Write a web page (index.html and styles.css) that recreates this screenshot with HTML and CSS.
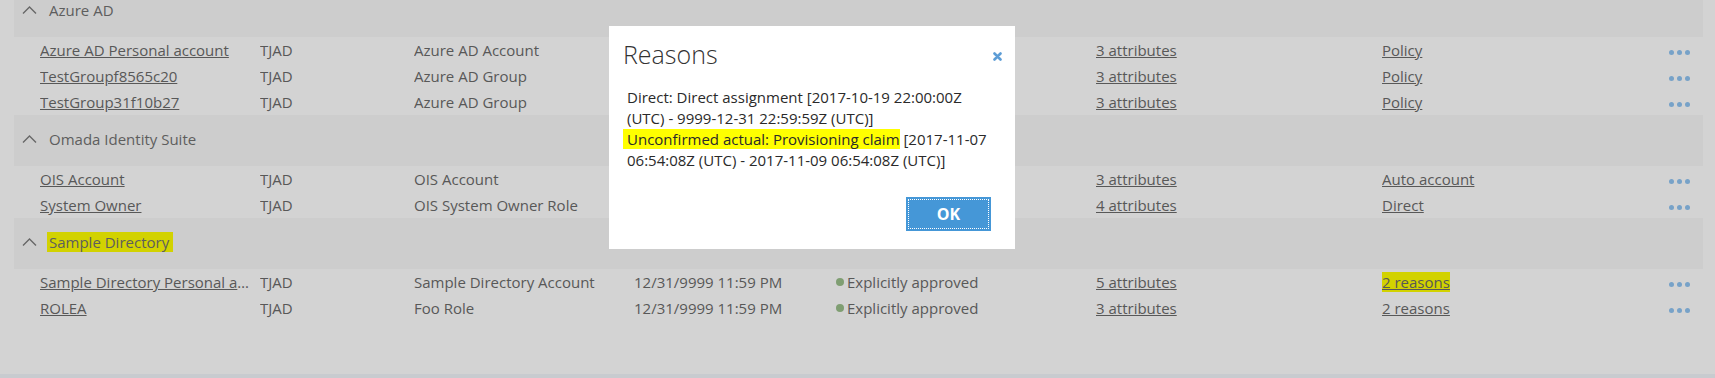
FILE: index.html
```html
<!DOCTYPE html>
<html lang="en">

<head>
    <meta charset="UTF-8">
    <meta name="viewport" content="width=device-width, initial-scale=1.0">
    <title>Assignments - Reasons</title>
    <link rel="stylesheet" href="styles.css">
</head>

<body>

    <div class="page">
        <div class="list">

            <div class="group-head">
                <svg class="chevron" width="15" height="8" viewBox="0 0 15 8"><polyline points="1,7.5 7.5,1 14,7.5"></polyline></svg>
                <span>Azure AD</span>
            </div>
            <div class="row">
                <div class="cell"><a href="#">Azure AD Personal account</a></div>
                <div class="cell">TJAD</div>
                <div class="cell">Azure AD Account</div>
                <div class="cell"></div>
                <div class="cell"></div>
                <div class="cell"><a href="#">3 attributes</a></div>
                <div class="cell"><a href="#">Policy</a></div>
                <div class="more"><i></i><i></i><i></i></div>
            </div>
            <div class="row">
                <div class="cell"><a href="#">TestGroupf8565c20</a></div>
                <div class="cell">TJAD</div>
                <div class="cell">Azure AD Group</div>
                <div class="cell"></div>
                <div class="cell"></div>
                <div class="cell"><a href="#">3 attributes</a></div>
                <div class="cell"><a href="#">Policy</a></div>
                <div class="more"><i></i><i></i><i></i></div>
            </div>
            <div class="row">
                <div class="cell"><a href="#">TestGroup31f10b27</a></div>
                <div class="cell">TJAD</div>
                <div class="cell">Azure AD Group</div>
                <div class="cell"></div>
                <div class="cell"></div>
                <div class="cell"><a href="#">3 attributes</a></div>
                <div class="cell"><a href="#">Policy</a></div>
                <div class="more"><i></i><i></i><i></i></div>
            </div>

            <div class="group-head">
                <svg class="chevron" width="15" height="8" viewBox="0 0 15 8"><polyline points="1,7.5 7.5,1 14,7.5"></polyline></svg>
                <span>Omada Identity Suite</span>
            </div>
            <div class="row">
                <div class="cell"><a href="#">OIS Account</a></div>
                <div class="cell">TJAD</div>
                <div class="cell">OIS Account</div>
                <div class="cell"></div>
                <div class="cell"></div>
                <div class="cell"><a href="#">3 attributes</a></div>
                <div class="cell"><a href="#">Auto account</a></div>
                <div class="more"><i></i><i></i><i></i></div>
            </div>
            <div class="row">
                <div class="cell"><a href="#">System Owner</a></div>
                <div class="cell">TJAD</div>
                <div class="cell">OIS System Owner Role</div>
                <div class="cell"></div>
                <div class="cell"></div>
                <div class="cell"><a href="#">4 attributes</a></div>
                <div class="cell"><a href="#">Direct</a></div>
                <div class="more"><i></i><i></i><i></i></div>
            </div>

            <div class="group-head">
                <svg class="chevron" width="15" height="8" viewBox="0 0 15 8"><polyline points="1,7.5 7.5,1 14,7.5"></polyline></svg>
                <span class="marker marker-head">Sample Directory</span>
            </div>
            <div class="row">
                <div class="cell"><a href="#">Sample Directory Personal account</a></div>
                <div class="cell">TJAD</div>
                <div class="cell">Sample Directory Account</div>
                <div class="cell">12/31/9999 11:59 PM</div>
                <div class="cell status"><span class="dot"></span>Explicitly approved</div>
                <div class="cell"><a href="#">5 attributes</a></div>
                <div class="cell"><a href="#" class="marker">2 reasons</a></div>
                <div class="more"><i></i><i></i><i></i></div>
            </div>
            <div class="row">
                <div class="cell"><a href="#">ROLEA</a></div>
                <div class="cell">TJAD</div>
                <div class="cell">Foo Role</div>
                <div class="cell">12/31/9999 11:59 PM</div>
                <div class="cell status"><span class="dot"></span>Explicitly approved</div>
                <div class="cell"><a href="#">3 attributes</a></div>
                <div class="cell"><a href="#">2 reasons</a></div>
                <div class="more"><i></i><i></i><i></i></div>
            </div>

        </div>
    </div>
    <div class="bottom-strip"></div>

    <!-- Reasons dialog, shown over the dimmed list -->
    <div class="modal">
        <div class="modal-header">
            <h2 class="modal-title">Reasons</h2>
            <svg class="close" width="9" height="9" viewBox="0 0 9 9"><path d="M1.5 1.5 L7.5 7.5 M7.5 1.5 L1.5 7.5"></path></svg>
        </div>
        <div class="modal-body">
            <p>Direct: Direct assignment [2017-10-19 22:00:00Z (UTC) - 9999-12-31 22:59:59Z (UTC)]</p>
            <p><span class="highlight">Unconfirmed actual: Provisioning claim</span> [2017-11-07 06:54:08Z (UTC) - 2017-11-09 06:54:08Z (UTC)]</p>
        </div>
        <div class="modal-footer">
            <button class="ok-button">OK</button>
        </div>
    </div>

</body>

</html>
```

FILE: styles.css
```css
body {
    font-family: 'Open Sans', 'Liberation Sans', sans-serif;
    margin: 0;
    padding: 0;
    background-color: #d3d3d3;
    color: #585858;
    font-size: 15px;
}

.page {
    height: 374px;
    overflow: hidden;
    padding: 0 12px 0 14px;
}

.list {
    margin-top: -14px;
}

.group-head {
    height: 51px;
    box-sizing: border-box;
    display: flex;
    align-items: center;
    gap: 12px;
    padding: 0 0 3px 8px;
    background-color: #cdcdcd;
    color: #5e5e5e;
}

.chevron polyline {
    fill: none;
    stroke: #676767;
    stroke-width: 1.4;
}

.row {
    height: 26px;
    display: grid;
    grid-template-columns: 220px 154px 220px 203px 259px 286px 287px 21px;
    align-items: center;
    padding-left: 26px;
    line-height: 26px;
}

.cell {
    white-space: nowrap;
    overflow: hidden;
    padding-right: 10px;
}

.cell a {
    display: block;
    color: #585858;
    text-decoration: underline;
    overflow: hidden;
    text-overflow: ellipsis;
}

.cell a.marker {
    display: inline;
}

.marker {
    background-color: #d2d200;
}

.marker-head {
    padding: 0 4px 0 2px;
    margin-left: -2px;
}

.status {
    display: flex;
    align-items: center;
    overflow: visible;
}

.dot {
    flex: none;
    width: 8px;
    height: 8px;
    border-radius: 50%;
    background-color: #7f9e72;
    margin: 0 3px 0 -1px;
}

.more {
    display: flex;
    gap: 3px;
    margin-top: 4px;
}

.more i {
    width: 5px;
    height: 5px;
    border-radius: 50%;
    background-color: #77a2c8;
}

.bottom-strip {
    height: 4px;
    background-color: #c8cbcf;
}

.modal {
    position: absolute;
    left: 609px;
    top: 26px;
    width: 406px;
    background-color: #fff;
    color: #2a2a2a;
}

.modal-header {
    display: flex;
    justify-content: space-between;
    align-items: center;
    padding: 13px 13px 0 14px;
}

.modal-title {
    margin: 0;
    font-size: 25px;
    font-weight: 300;
    line-height: 30px;
    color: #333;
}

.close {
    margin-top: 4px;
}

.close path {
    stroke: #5d9dd6;
    stroke-width: 2.6;
    stroke-linecap: round;
}

.modal-body {
    padding: 18px 18px 0 18px;
    line-height: 21px;
}

.modal-body p {
    margin: 0;
}

.highlight {
    background-color: #ffff00;
    padding-left: 4px;
    margin-left: -4px;
}

.modal-footer {
    display: flex;
    justify-content: flex-end;
    padding: 26px 24px 18px;
}

.ok-button {
    width: 85px;
    height: 34px;
    border: none;
    background-color: #4597d7;
    color: #fff;
    font-family: 'Open Sans', sans-serif;
    font-size: 16px;
    font-weight: 700;
    outline: 1px dotted #fff;
    outline-offset: -3px;
    cursor: pointer;
}
```
